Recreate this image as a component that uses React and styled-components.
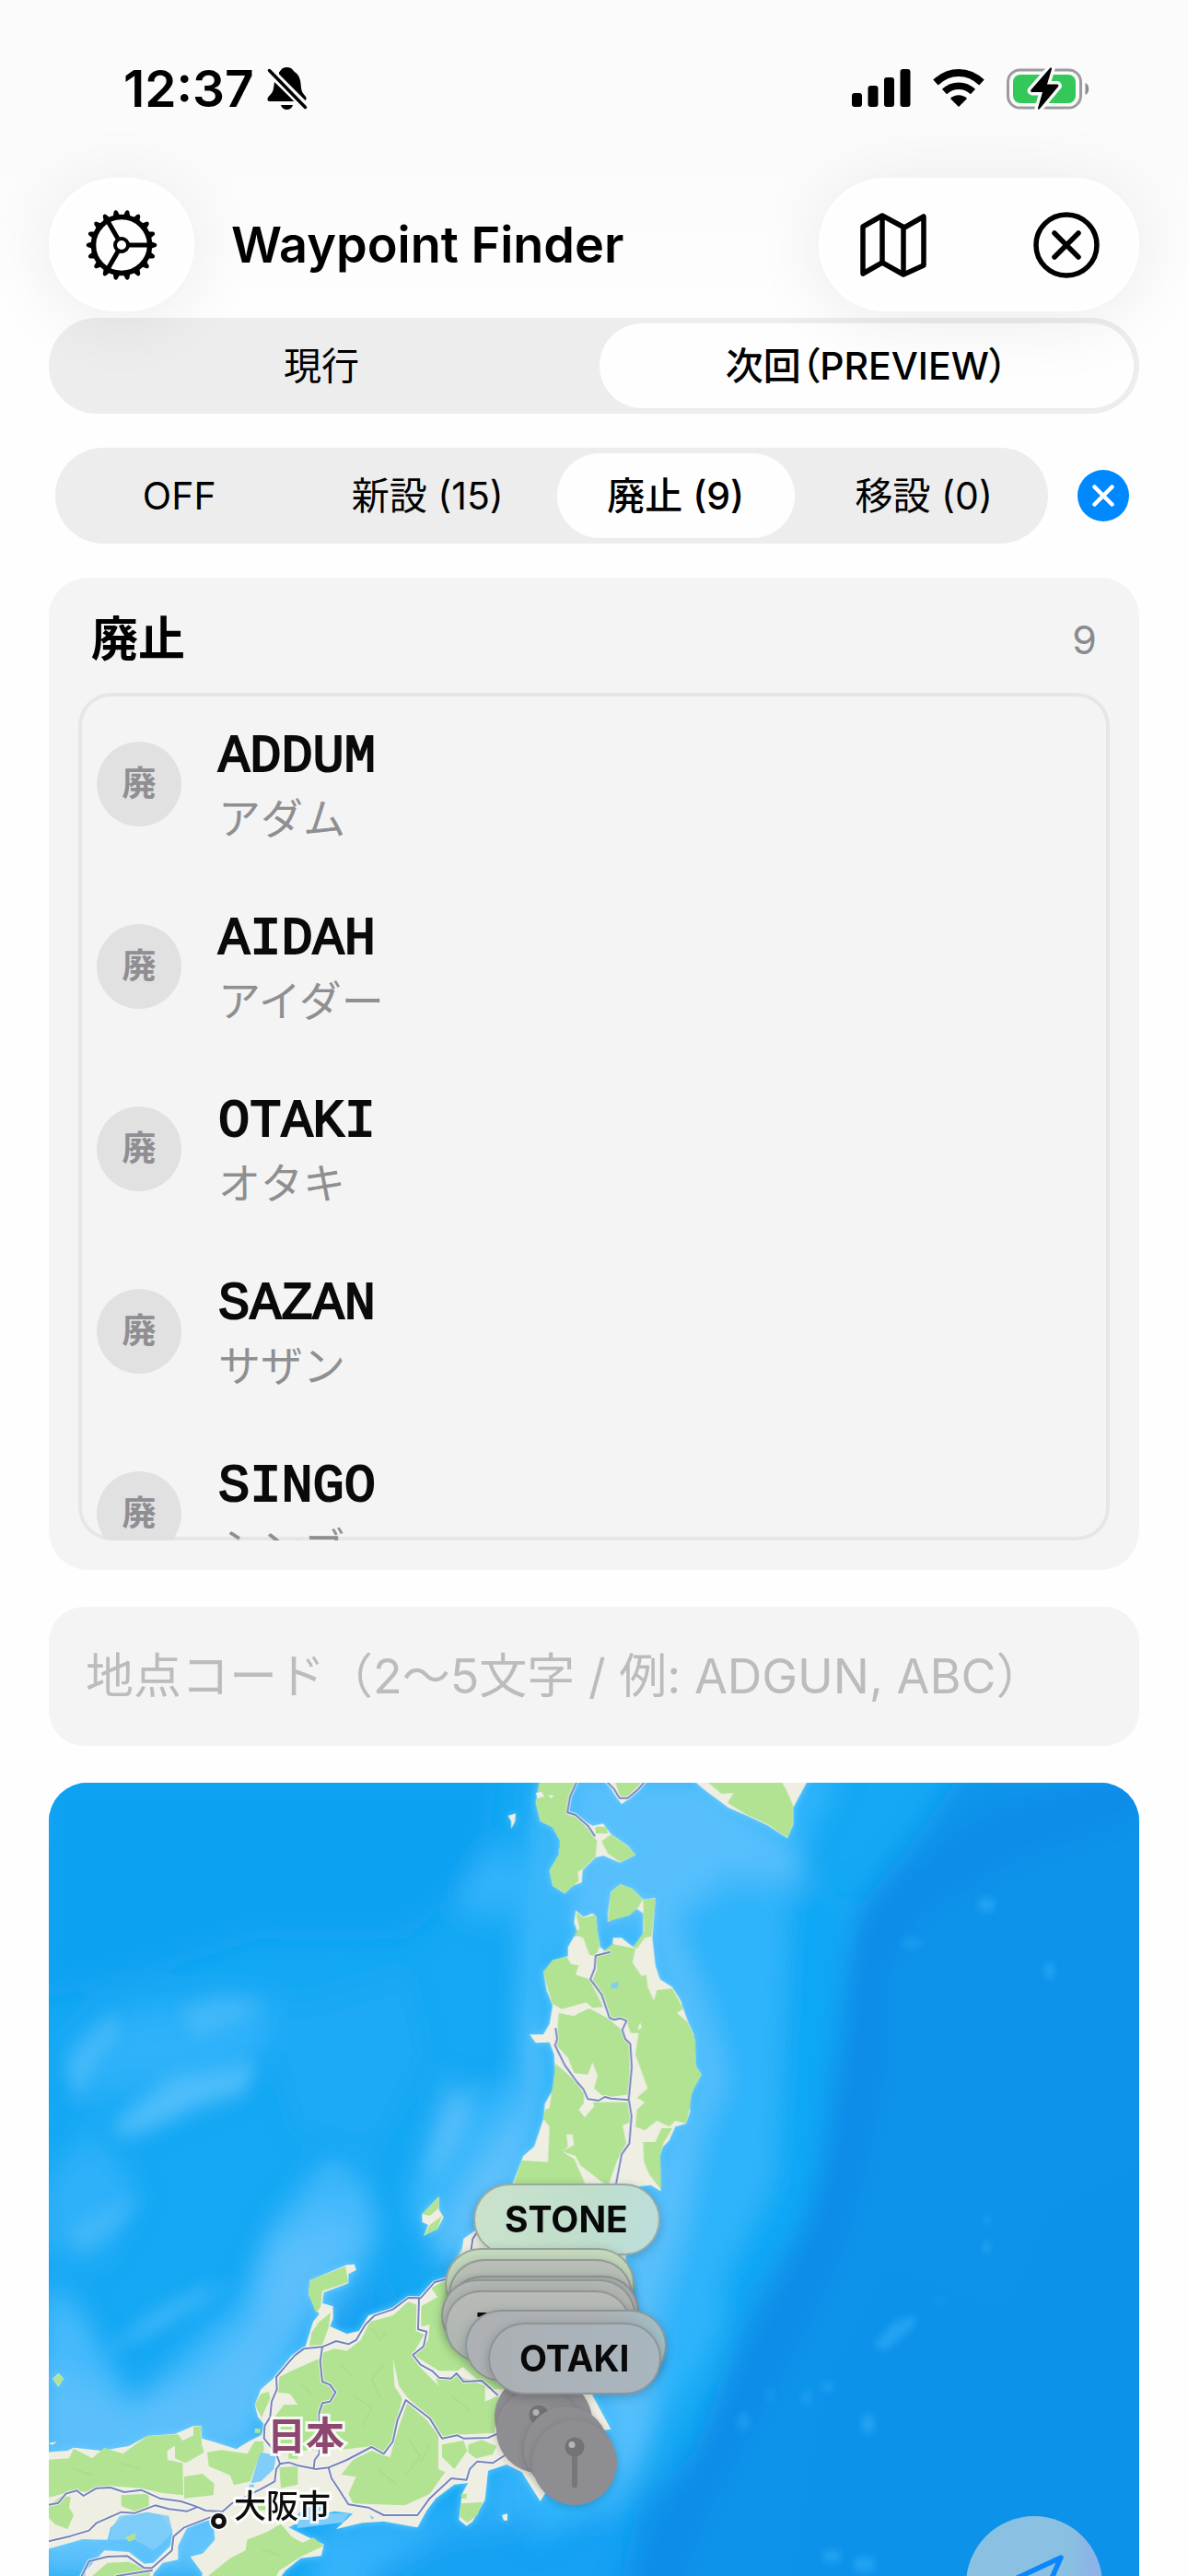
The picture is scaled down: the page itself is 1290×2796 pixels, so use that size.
import React, { useState } from "react";
import styled, { createGlobalStyle, css } from "styled-components";

const GlobalStyle = createGlobalStyle`
  * { box-sizing: border-box; }
  body {
    margin: 0;
    background: #fefefe;
    color: #000;
    font-family: "Inter", "Noto Sans CJK JP", sans-serif;
    -webkit-font-smoothing: antialiased;
  }
  button, input { font: inherit; color: inherit; }
  button { border: 0; padding: 0; background: none; cursor: pointer; }
`;

const Screen = styled.div`
  height: 100vh;
  overflow: hidden;
  display: flex;
  flex-direction: column;
  background: #fefefe;
`;

/* ---------- status bar ---------- */

const StatusBar = styled.div`
  flex: none;
  height: 193px;
  padding: 68px 106px 69px 134px;
  display: flex;
  align-items: center;
  justify-content: space-between;
  background: #fbfbfb;
`;

const StatusGroup = styled.div`
  display: flex;
  align-items: center;
  gap: ${(p) => p.$gap}px;
`;

const Clock = styled.time`
  font-size: 55px;
  font-weight: 600;
  line-height: 56px;
`;

/* ---------- navigation bar ---------- */

const NavBar = styled.header`
  position: relative;
  z-index: 1;
  flex: none;
  display: flex;
  align-items: center;
  padding: 0 53px;
  height: 145px;
  background: linear-gradient(#fbfbfb, #fefefe);
`;

const glass = css`
  height: 145px;
  border-radius: 73px;
  background: #fefefe;
  box-shadow: 0 8px 80px rgba(0, 0, 0, 0.08), inset 0 0 0 4px #fff;
`;

const RoundButton = styled.button`
  ${glass}
  width: 158px;
  display: grid;
  place-items: center;
`;

const ButtonGroup = styled.div`
  ${glass}
  width: 348px;
  display: flex;
  justify-content: space-between;
  padding: 0 31px 0 33px;
`;

const IconButton = styled.button`
  width: 96px;
  height: 145px;
  display: grid;
  place-items: center;
`;

const Title = styled.h1`
  flex: 1;
  margin: 0 0 0 40px;
  font-size: 54px;
  font-weight: 600;
  line-height: 66px;
`;

/* ---------- segmented controls ---------- */

const Content = styled.main`
  flex: none;
  display: flex;
  flex-direction: column;
  padding: 7px 53px 0;
`;

const Segmented = styled.div`
  flex: 1;
  height: 104px;
  display: grid;
  grid-auto-flow: column;
  grid-auto-columns: minmax(0, 1fr);
  border-radius: 52px;
  background: #ededed;
`;

const Segment = styled.button`
  margin: 6px;
  border-radius: 46px;
  font-size: 41px;
  font-weight: ${(p) => (p.$active ? 500 : 400)};
  font-feature-settings: "palt";
  line-height: 46px;
  white-space: nowrap;
  background: ${(p) => (p.$active ? "#fefefe" : "transparent")};
`;

const CycleRow = styled.div`
  display: flex;
`;

const FilterRow = styled.div`
  display: flex;
  align-items: center;
  gap: 32px;
  padding: 0 11px 0 7px;
  margin-top: 37px;
`;

const ClearButton = styled.button`
  width: 56px;
  height: 56px;
  border-radius: 50%;
  background: #0088ff;
  display: grid;
  place-items: center;
`;

/* ---------- result card ---------- */

const Card = styled.section`
  margin-top: 37px;
  padding: 0 32px 32px;
  border-radius: 42px;
  background: #f4f4f4;
`;

const CardHeader = styled.div`
  height: 125px;
  padding: 8px 14px 0;
  display: flex;
  align-items: center;
  justify-content: space-between;
`;

const CardTitle = styled.h2`
  margin: 0;
  font-size: 51px;
  font-weight: 700;
  line-height: 64px;
`;

const CardCount = styled.span`
  font-size: 43px;
  line-height: 64px;
  color: #8a8a8e;
`;

const List = styled.ul`
  height: 920px;
  margin: 0;
  padding: 0 20px;
  list-style: none;
  overflow: hidden;
  border-radius: 36px;
  box-shadow: inset 0 0 0 4px #e6e6e6;
`;

const Row = styled.li`
  height: 198px;
  display: flex;
  align-items: center;
  gap: 40px;
`;

const Badge = styled.span`
  width: 92px;
  height: 92px;
  border-radius: 50%;
  background: #e1e1e1;
  color: #8e8e93;
  font-size: 37px;
  font-weight: 600;
  line-height: 92px;
  text-align: center;
`;

const Names = styled.div`
  display: flex;
  flex-direction: column;
  padding-top: 8px;
`;

const Code = styled.span`
  font-family: "Liberation Mono", monospace;
  font-size: 57px;
  font-weight: 400;
  line-height: 66px;
  color: #0a0a0a;
  -webkit-text-stroke: 2px #0a0a0a;
`;

const Kana = styled.span`
  font-size: 46px;
  line-height: 66px;
  color: #8f8f92;
`;

const SearchField = styled.input`
  margin-top: 40px;
  width: 100%;
  height: 151px;
  padding: 0 40px;
  border: 0;
  outline: none;
  border-radius: 38px;
  background: #f4f4f4;
  font-size: 52px;
  &::placeholder { color: #bcbcbe; opacity: 1; }
`;

/* ---------- map ---------- */

const MapPanel = styled.section`
  position: relative;
  margin-top: 40px;
  height: 984px;
  overflow: hidden;
  border-radius: 42px;
  background: #12a5f3;
`;

const MapDrawing = styled.svg`
  display: block;
  width: 100%;
  height: 100%;
`;

const onMap = css`
  position: absolute;
  left: calc(50% - 592px + ${(p) => p.$x}px);
  top: ${(p) => p.$y}px;
`;

const PlaceLabel = styled.span`
  ${onMap}
  font-size: ${(p) => p.$size}px;
  font-weight: ${(p) => (p.$country ? 700 : 500)};
  line-height: 50px;
  color: ${(p) => (p.$country ? "#8e4770" : "#0c0c0c")};
  -webkit-text-stroke: 6px rgba(255, 255, 255, 0.85);
  paint-order: stroke fill;
`;

const CityDot = styled.span`
  ${onMap}
  width: 17px;
  height: 17px;
  border: 5px solid #111;
  border-radius: 50%;
  background: #fff;
  box-shadow: 0 0 0 2px rgba(255, 255, 255, 0.8);
`;

const PinDisc = styled.span`
  ${onMap}
  width: 92px;
  height: 92px;
  border-radius: 50%;
  background: #8e8d92;
  box-shadow: 0 2px 8px rgba(0, 0, 0, 0.16);
  svg { display: block; }
`;

const Tag = styled.span`
  ${onMap}
  width: ${(p) => p.$w}px;
  height: 78px;
  padding-left: 32px;
  border: 2px solid rgba(110, 118, 118, 0.5);
  border-radius: 39px;
  background: ${(p) => p.$fill};
  box-shadow: 0 3px 12px rgba(0, 0, 0, 0.2);
  color: #090909;
  font-size: 39px;
  font-weight: 700;
  line-height: 74px;
`;

const LocateButton = styled.button`
  position: absolute;
  right: 40px;
  bottom: 40px;
  width: 148px;
  height: 148px;
  border-radius: 50%;
  display: grid;
  place-items: center;
  background: linear-gradient(90deg, #8ac0e1 75%, #8cb4e8 92%);
`;

/* ---------- icons ---------- */

const BellSlash = () => (
  <svg width="44" height="48" viewBox="0 0 44 48" aria-hidden="true">
    <path d="M13 6.500C15 5 15.500 1 21.500 1c6 0 6.500 4 9 5.500 5.500 4 6 10 6.500 17 .3 4 2.500 6.500 5 9.500 1 1.300.7 3.500-.5 4L13 8.500z" />
    <path d="M8 17l21.500 21H3c-3 0-3-3-1.500-5C4 30 6.500 28 7 24z" />
    <path d="M15 42h13c-1 3.500-3.500 5-6.500 5S16 45.500 15 42z" />
    <path d="M2.500 4.500l39 40" stroke="#fbfbfb" strokeWidth="8" />
    <path d="M2.500 4.500l39 40" stroke="#000" strokeWidth="3.500" strokeLinecap="round" />
  </svg>
);

const Signal = () => (
  <svg width="64" height="42" viewBox="0 0 64 42" aria-hidden="true">
    <rect x="0" y="26" width="11" height="15" rx="3" />
    <rect x="17.500" y="18" width="11" height="23" rx="3" />
    <rect x="35" y="9" width="11" height="32" rx="3" />
    <rect x="52.500" y="0" width="11" height="41" rx="3" />
  </svg>
);

const Wifi = () => (
  <svg width="56" height="42" viewBox="0 0 56 42" aria-hidden="true">
    <path d="M28 41l-9-9c4.500-5 13.500-5 18 0z" />
    <path d="M12.500 24.500c9-8.500 22-8.500 31 0" fill="none" stroke="#000" strokeWidth="7.500" />
    <path d="M3 14.500c15-14 35-14 50 0" fill="none" stroke="#000" strokeWidth="8" />
  </svg>
);

const Battery = () => (
  <svg width="91" height="48" viewBox="0 0 91 48" aria-hidden="true">
    <rect x="1.500" y="4" width="79" height="41" rx="13" fill="none" stroke="#9c9c9c" strokeWidth="3" />
    <path d="M85.500 18c5 2 5 11 0 13z" fill="#8c8c8c" />
    <rect x="7" y="9" width="68" height="31" rx="8" fill="#34c759" />
    <path
      d="M47 2L26.500 25.500a1.500 1.500 0 0 0 1 2.500H39l-5 17.500c-.3 1.200 1 1.500 1.800.7L56 22a1.500 1.500 0 0 0-1-2.500H44L49 3c.3-1.300-1-2-2-1z"
      stroke="#fbfbfb" strokeWidth="7" paintOrder="stroke" strokeLinejoin="round"
    />
  </svg>
);

const teeth = Array.from({ length: 18 }, (_, i) => i * 20);

const Gear = () => (
  <svg width="78" height="78" viewBox="-39 -39 78 78" aria-hidden="true">
    {teeth.map((a) => (
      <path key={a} d="M30 -4.500L37 -2a2.200 2.200 0 0 1 0 4L30 4.500z" transform={`rotate(${a})`} />
    ))}
    <g fill="none" stroke="#000">
      <circle r="30.500" strokeWidth="5.500" />
      <circle r="7" strokeWidth="4" />
      {[0, 120, 240].map((a) => (
        <path key={a} d="M8 0H30" strokeWidth="5" transform={`rotate(${a})`} />
      ))}
    </g>
  </svg>
);

const FoldedMap = () => (
  <svg width="74" height="70" viewBox="0 0 74 70" fill="none" stroke="#000" strokeWidth="5.500" strokeLinejoin="round" aria-hidden="true">
    <path d="M4 15L25 3l24 13L70 4v53L48 67 25 54 4 66z" />
    <path d="M25 3v51M48 16v51" />
  </svg>
);

const CircleX = () => (
  <svg width="72" height="72" viewBox="0 0 72 72" fill="none" stroke="#000" strokeWidth="5.500" strokeLinecap="round" aria-hidden="true">
    <circle cx="36" cy="36" r="33" />
    <path d="M23 23l26 26M49 23L23 49" />
  </svg>
);

const SmallX = () => (
  <svg width="24" height="24" viewBox="0 0 24 24" fill="none" stroke="#fff" strokeWidth="4.500" strokeLinecap="round" aria-hidden="true">
    <path d="M2.500 2.500l19 19M21.500 2.500l-19 19" />
  </svg>
);

const PinGlyph = () => (
  <svg width="92" height="92" viewBox="0 0 92 92" aria-hidden="true">
    <path d="M43 34h6v36c-.5 5-5.500 5-6 0z" fill="#77767b" />
    <circle cx="46" cy="29" r="10.500" fill="#737277" />
    <circle cx="43" cy="26.500" r="3.500" fill="#b5b4b8" />
  </svg>
);

const LocateArrow = () => (
  <svg width="66" height="66" viewBox="0 0 66 66" fill="none" stroke="#0a86ff" strokeWidth="5.500" strokeLinejoin="round" aria-hidden="true">
    <path d="M62 4L4 31l28 3 4 28z" />
  </svg>
);

/* ---------- map artwork ---------- */

const Sea = () => (
  <>
    <rect x="53" y="1935" width="1184" height="984" fill="#15a8f4" />
    <g transform="translate(40 1920) scale(.4018 .5587)" filter="url(#soft)">
      <path d="M30 0H1250L1200 200 1000 330 600 330 300 400 0 450z" fill="#0ca1f1" />
      <path d="M620 480L1000 400 1050 560 900 750 700 700z" fill="#1aa9f5" />
      <path d="M60 560L170 480 320 460 500 440 660 450 600 560 560 620 400 660 250 712 190 700 330 610 120 650z" fill="#35b4fa" opacity=".8" />
      <path d="M40 780L150 700 290 830 180 950 60 950 0 900z" fill="#34b3fa" opacity=".8" />
      <path d="M20 1010L110 1040 260 1230 480 1080 540 1050 620 900 760 780 880 790 930 900 860 1000 700 1150 580 1330 0 1400z" fill="#45b9fb" />
      <path d="M20 1150L230 1230 430 1190 600 1080 640 930 780 880 900 920 800 960 640 1150 560 1340 0 1400z" fill="#60c1fb" opacity=".8" />
      <path d="M1350 0L1300 300 1290 600 1060 700 1000 850 1030 900 1150 960 1400 800 1600 0z" fill="#3bb7fb" />
      <path d="M1060 780L1160 640 1110 610 1080 700z M1320 440L1400 600 1270 830 1130 960 1060 940 1180 780 1340 640z M1380 100L1500 330 1390 300z" fill="#5ec1fb" />
      <path d="M1120 270L1200 170 1290 150 1330 250 1250 290z" fill="#33b3fa" />
      <path d="M700 1100L900 1010 1000 1010 860 1100z" fill="#189ff2" />
      <path d="M0 1430H600L500 1568H0z" fill="#62c3fb" />
      <path d="M760 1470L1200 1440 1260 1330 1600 1330 1600 1800H700z" fill="#35b2fa" />
      <path d="M900 1568L1100 1480 1300 1460 1600 1440 1600 1800H850z" fill="#14a1f3" />
    </g>
    <g transform="translate(40 1920) scale(.4018 .5587)" fill="#5cc1fb" filter="url(#haze)">
      <path d="M190 700L300 640 370 600 460 590 590 575 560 625 430 655 330 690 250 710z" opacity=".75" />
      <path d="M80 570L140 520 210 480 230 510 180 550 130 610 110 650z M380 470L500 445 620 455 540 490 430 520z" opacity=".5" />
      <path d="M170 1135L290 1070 330 1050 430 1015 530 995 430 1045 300 1100z" opacity=".6" />
      <path d="M90 890L200 850 280 835 200 900 110 940z M750 800L790 765 870 800 820 790z" opacity=".45" />
      <path d="M1050 780L1130 660 1210 590 1140 720 1080 790z" opacity=".5" />
    </g>
    <g transform="translate(620 1920) scale(.4273 .5587)" filter="url(#soft)">
      <path d="M-60 0H700L560 200 600 500 560 850 430 1000 340 1150 250 1250 100 1400 -100 1500z" fill="#2fb4fa" />
      <path d="M0 0H330L560 150 620 220 400 210 260 290 340 450 400 600 330 720 290 900 220 1060 200 1330 120 1400 60 1100 150 900 250 700 330 600 180 300 0 330z" fill="#5ec1fb" opacity=".85" />
      <path d="M560 240L700 250 660 560 600 840 450 1020 390 1100 380 1000 520 800z" fill="#10a7f5" />
      <path d="M1000 0L860 150 730 270 700 400 660 600 630 780 590 880 450 1050 380 1200 310 1330 170 1430 130 1568V1800H1500V0z" fill="#1093ea" />
      <path d="M1500 750L1220 850 1100 1050 800 960 640 1200 570 1500 540 1800H1500z" fill="#0792ea" opacity=".8" />
      <path d="M1500 20L1100 130 850 240 750 370 750 560 700 760 640 920 540 1080 400 1280 300 1420 200 1620" fill="none" stroke="#0b8ae7" strokeWidth="90" opacity=".85" />
    </g>
    <g transform="translate(620 1920) scale(.4273 .5587)" fill="#29a9f4" opacity=".75" filter="url(#glow)">
      <path d="M765 1120L820 1075 880 1060 870 1085 800 1130z M915 1035l45-8-20 10z" />
      <circle cx="1216" cy="392" r="15" /><ellipse cx="1056" cy="264" rx="24" ry="14" />
      <ellipse cx="865" cy="338" rx="28" ry="12" opacity=".6" /><circle cx="1056" cy="928" r="11" />
      <circle cx="1056" cy="876" r="8" /><ellipse cx="652" cy="1200" rx="20" ry="7" />
      <circle cx="598" cy="1222" r="16" opacity=".6" /><circle cx="755" cy="1272" r="19" />
      <circle cx="438" cy="1268" r="18" opacity=".7" /><circle cx="506" cy="1216" r="12" opacity=".6" />
      <ellipse cx="663" cy="1530" rx="24" ry="13" /><ellipse cx="745" cy="1545" rx="30" ry="15" />
    </g>
  </>
);

const NorthLand = () => (
  <g transform="translate(500 1930) scale(.33333)">
    <g fill="#eeeee3" filter="url(#coast)">
      <path d="M260 0L245 80 260 140 300 160 325 205 320 250 290 300 300 350 340 376 365 350 395 340 398 300 440 258 465 252 520 275 570 250 545 220 490 182 465 148 430 155 380 125 350 112 355 60 385 0z" />
      <path d="M470 0L500 50 525 85 550 65 605 12V0z M764 0V12L800 42 873 96 940 125 1001 154 1065 196 1084 150 1084 96 1129 12V0z" />
      <path d="M155 122L180 115 178 140 165 165 165 140z" />
      <path d="M375 430L400 452 430 440 442 450 445 490 455 550 470 562 495 555 497 520 525 520 560 548 575 548 595 510 595 440 575 425 520 450 480 468 480 440 490 370 520 345 560 360 595 395 635 390 625 520 635 610 650 655 690 680 715 720 740 790 760 835 768 940 785 965 760 1010 745 1050 748 1085 735 1125 700 1135 680 1180 660 1200 650 1230 652 1345 620 1325 580 1330 540 1550 520 1730 0 1700 -10 1560 10 1520 50 1480 170 1320 205 1230 240 1200 270 1110 275 1060 310 1000 305 900 290 860 245 862 225 835 270 835 290 800 300 740 280 690 270 630 350 578 350 550 370 515 385 512 370 470z" />
    </g>
    <g fill="#b1e393">
      <path d="M260 0L245 80 260 140 300 160 325 205 320 250 290 300 300 350 340 374 385 335 382 305 400 295 440 255 445 205 420 170 380 125 350 112 355 60 380 0z" />
      <path d="M440 158H475L480 180H440z M460 205L490 184 545 222 570 250 520 274 480 245z M500 0L520 60 545 60 595 12V0z M790 0L850 50 890 48 870 80 930 118 1001 150 1065 194 1082 150 1084 90 1062 40 1040 0z" />
      <path d="M270 630L300 592 345 580 360 605 385 610 375 640 420 655 465 745 430 748 410 730 330 752 300 735 285 690z" />
      <path d="M375 435L400 455 440 445 445 490 453 550 440 580 420 575 400 520 370 510 388 490z" />
      <path d="M480 466L490 370 520 346 560 360 593 395 580 420 550 448z M595 395L635 392 622 515 600 520 575 555 562 550 598 500z" />
      <path d="M445 620L440 585 495 540 570 555 560 600 590 645 605 640 610 680 630 725 640 690 690 685 725 750 705 765 740 795 765 850 767 940 785 965 755 1020 745 1080 735 1125 700 1115 680 1135 640 1115 600 1147 570 1135 575 1080 600 1055 575 1040 610 1010 570 900 580 830 555 830 540 790 490 780 470 740 430 660z" />
      <path d="M320 765L370 775 385 765 420 750 480 782 525 820 553 870 550 1030 470 1040 435 1010 447 970 430 925 415 965 370 960 350 910 312 870z" />
      <path d="M310 930L380 990 412 1045 385 1080 405 1105 425 1080 430 1055 545 1055 555 1120 528 1130 540 1190 510 1245 480 1330 390 1260 375 1230 330 1215 370 1195 365 1160 345 1160 350 1200 330 1215 370 1240 410 1330 170 1330 200 1245 285 1250 290 1135 270 1110 275 1080 290 1075z" />
      <path d="M595 1185L635 1185 655 1140 690 1140 660 1190 650 1230 653 1340 615 1290 598 1250z" />
    </g>
    <g fill="#f0f0e6">
      <path d="M245 48l20-4 8 16-22 6z M285 55l20 2-10 10z M585 795l6 18-14 6z M405 1010l20 10 10 50-20 20-14-30z" />
    </g>
    <path d="M492 668l22-5-2 20-22 2z" fill="#7fcdf5" />
  </g>
);

const CentralLand = () => (
  <g transform="translate(50 2360) scale(.33333)">
    <g fill="#eeeee3" filter="url(#coast)">
      <path d="M0 905L70 900 90 890 180 900 270 885 330 852 420 845 480 820 505 818 508 860 550 872 620 895 660 870 700 850 715 820 690 790 680 750 700 700 740 665 760 640 800 590 845 560 870 480 890 455 880 440 855 390 860 345 980 295 1005 293 1010 312 985 325 985 355 905 385 900 420 935 430 935 470 925 495 980 520 1020 510 1050 460 1130 435 1180 400 1215 400 1260 350 1300 340 1355 250 1360 210 1395 185 1500 150 1890 150 1890 260 1780 720 1840 830 1700 850 1625 1040 1610 1065 1550 970 1500 945 1440 965 1430 1060 1390 1130 1370 1145 1345 1125 1355 1040 1375 1005 1330 1010 1270 1055 1240 1095 1210 1150 1100 1130 1030 1135 945 1155 1000 1105 940 1097 880 1110 830 1130 790 1150 850 1180 905 1205 897 1242 830 1250 780 1290 700 1400 480 1400 510 1300 470 1245 510 1235 550 1190 545 1125 500 1130 460 1150 430 1210 430 1255 380 1265 350 1300 330 1400H110L130 1290 190 1225 270 1230 320 1268 350 1265 415 1200 410 1155 370 1108 330 1100 260 1112 210 1150 200 1190 120 1188 0 1222z" />
      <path d="M1225 130L1280 72 1280 115 1295 140 1275 178 1230 200 1245 165 1225 155z M22 665L40 648 57 665 40 692z M1485 1110l18-5v22h-12z M8 875l28-4-16 10z" />
    </g>
    <g fill="#b1e393">
      <path d="M0 930L75 925 90 893 150 925 190 890 250 910 330 852 430 847 445 868 395 900 395 930 445 940 447 1045 380 1038 310 1022 210 1015 130 1035 95 1030 0 1055z" />
      <path d="M420 880L480 850 480 822 505 820 507 880 515 905 455 940 420 925z M525 905L570 898 655 910 680 870 708 870 710 898 690 930 665 1000 612 1012 600 980 530 950z" />
      <path d="M450 985L510 975 548 1008 545 1045 450 1055z M245 1045L335 1040 335 1085 290 1097 245 1080z M0 1085L50 1048 80 1050 75 1085 90 1110 70 1155 30 1140 0 1110z M760 955L820 950 820 1010 765 1022z" />
      <path d="M905 580L940 568 980 575 1025 540 1055 480 1130 460 1180 415 1207 425 1205 510 1232 522 1192 590 1220 630 1280 690 1270 665 1340 655 1430 690 1430 740 1475 720 1460 842 1340 848 1290 855 1250 790 1180 730 1150 690 1130 598 1135 690 1160 730 1130 860 1100 903 1060 885 980 895 820 900 770 895 745 880 745 790 775 750 820 750 795 715 755 710 760 660 800 640 890 600z" />
      <path d="M1177 745L1240 800 1278 850 1278 960 1300 970 1250 1040 1170 1078 1000 1072 985 1040 1010 985 962 978 1000 930 1060 900 1120 922 1150 820z" />
      <path d="M1290 880L1360 867 1372 900 1330 960 1290 920z M1375 880L1420 865 1467 885 1455 912 1400 925 1375 905z M1350 1072L1422 1068 1405 1110 1372 1135 1348 1115z M1352 1040h18v16h-18z" />
      <path d="M500 1330L600 1250 650 1225 655 1190 720 1165 765 1138 800 1180 835 1200 870 1183 905 1210 830 1245 760 1290 700 1400 480 1400z M680 750L700 715 725 708 730 730 702 792z M760 870h40v40h-40z M790 900h30v26h-30z M690 1080h24v14h-24z M680 828h18v14h-18z" />
      <path d="M855 390L860 345 975 300 985 352 900 380 895 430 880 452z M858 558L865 515 890 480 927 450 920 500 900 555z M1222 430L1275 400 1255 370 1300 345 1330 570 1378 612 1340 640 1280 640 1200 590 1245 540 1250 490 1222 495z" />
      <path d="M1400 250H1850L1760 700H1440L1350 620z" />
      <path d="M1225 130L1280 72 1278 112 1250 135z M1250 165L1290 135 1275 178 1230 200z M22 665L40 650 57 665 40 690z M150 1308L200 1265 270 1262 340 1290 330 1400H130z M258 1180l34-12-2 20-20 6z" />
    </g>
    <g fill="none" stroke="#a5d589" strokeWidth="5" opacity=".5">
      <path d="M1060 500l30 40 20-30M1100 620l-40 50 30 60M960 620l40 40M1000 720l60 40-30 60M1180 860l40 60-50 60M1080 960l60 50M1250 880l-30 60M830 680l40 40M90 960l60 20M240 940l70 20M1320 720l60 50M700 1220l60 20" />
    </g>
    <g fill="#7fcdf8">
      <path d="M700 905L750 915 742 960 700 1000 668 1006 690 930z M820 1105l60-40 28 10-20 30 100-2-20 30-150 20z M662 1010h16v12h-16z M1055 1110l14 8-8 6z" />
      <path d="M240 1112L330 1102 400 1112 412 1165 380 1200 350 1225 290 1190 205 1190 215 1150z" opacity=".9" />
    </g>
    <path d="M258 1182l34-14-2 20-20 8z" fill="#b1e393" />
  </g>
);

const northRoads = [
  "M487 566L440 578 437 620 423 655 460 705 485 780 500 787 520 782 541 790 527 820 537 850 553 865 558 940 548 1045 557 1100 550 1190 525 1225 505 1330",
  "M310 815L315 850 308 870 340 935 380 990 400 1012 415 1045 450 1050 470 1038 490 1043 548 1048",
  "M384 0L357 60 348 112 375 120 415 155 437 188",
  "M465 0L500 35 518 65 545 65 580 35 610 0",
];

const centralRoads = [
  "M0 1078L40 1070 65 1040 100 1030 122 1047 165 1022 210 1020 255 1035 310 1028 370 1055 440 1065 490 1082 520 1095 575 1098 605 1072 700 1025 745 1000 750 960 762 943 790 938 820 948 880 960 920 955 980 930 1060 888 1100 910 1130 870 1145 800 1172 735 1250 795 1290 860 1340 850 1360 860 1440 858 1470 845",
  "M0 1197L80 1178 140 1160 165 1135 245 1100 290 1103 355 1078 400 1090 460 1097 490 1085",
  "M762 943L750 910 710 860 712 820 730 790 735 740 752 700 750 660 810 590 840 568 900 562 945 543 985 553 1010 540 1040 490 1070 460 1130 440 1180 402 1220 403 1265 352 1300 342",
  "M900 562L893 610 900 675 925 685 943 710 925 740 900 745 890 775 890 910 875 930 872 957",
  "M1215 403L1212 505 1240 512 1230 560 1195 588 1220 620 1260 642 1280 662 1320 665 1337 648 1360 675 1420 672 1470 718",
  "M920 955L930 990 950 1020 985 1075 1050 1085 1100 1110 1210 1110 1250 1055 1320 990 1370 995 1380 960 1405 935 1455 940 1495 915",
  "M110 1320L140 1260 200 1245 265 1243 320 1282 345 1282 410 1225 415 1180 450 1150 540 1115",
  "M230 1308L345 1290",
  "M1385 245L1390 210 1402 192",
];

const Roads = ({ lines, x, y }) => (
  <g transform={`translate(${x} ${y}) scale(.33333)`} fill="none" strokeLinejoin="round" strokeLinecap="round">
    <path d={lines.join("")} stroke="#f7f7fb" strokeWidth="12" opacity=".8" />
    <path d={lines.join("")} stroke="#7685b8" strokeWidth="6" />
  </g>
);

const Artwork = () => (
  <MapDrawing viewBox="53 1935 1184 984" preserveAspectRatio="xMidYMin slice" aria-hidden="true">
    <defs>
      <filter id="soft" x="-10%" y="-10%" width="120%" height="120%">
        <feGaussianBlur stdDeviation="30" />
      </filter>
      <filter id="haze" x="-10%" y="-10%" width="120%" height="120%">
        <feGaussianBlur stdDeviation="18" />
      </filter>
      <filter id="glow" x="-10%" y="-10%" width="120%" height="120%">
        <feGaussianBlur stdDeviation="8" />
      </filter>
      <filter id="coast" x="-5%" y="-5%" width="110%" height="110%">
        <feDropShadow dx="0" dy="0" stdDeviation="12" floodColor="#6fd0fd" floodOpacity=".9" />
      </filter>
    </defs>
    <Sea />
    <NorthLand />
    <CentralLand />
    <Roads lines={northRoads} x={500} y={1930} />
    <Roads lines={centralRoads} x={50} y={2360} />
  </MapDrawing>
);

/* ---------- data ---------- */

const cycles = ["現行", "次回（PREVIEW）"];
const filters = ["OFF", "新設 (15)", "廃止 (9)", "移設 (0)"];

const waypoints = [
  { code: "ADDUM", kana: "アダム" },
  { code: "AIDAH", kana: "アイダー" },
  { code: "OTAKI", kana: "オタキ" },
  { code: "SAZAN", kana: "サザン" },
  { code: "SINGO", kana: "シンゴ" },
];

const pins = [
  { x: 484, y: 642 },
  { x: 498, y: 647 },
  { x: 486, y: 657 },
  { x: 516, y: 677 },
  { x: 525, y: 692 },
];

const tags = [
  { x: 461, y: 435, w: 203, fill: "linear-gradient(100deg, #cbe2cc, #bfdecb 60%, #bcdedd)", label: "STONE" },
  { x: 430, y: 505, w: 206, fill: "linear-gradient(#c4d9bd, #b9cdb3)" },
  { x: 434, y: 517, w: 200, fill: "#b8beb6" },
  { x: 432, y: 535, w: 209, fill: "#a9b0ae" },
  { x: 426, y: 539, w: 211, fill: "#b2b6b2" },
  { x: 430, y: 551, w: 203, fill: "linear-gradient(#b8bbb8, #adb4b0)", label: "T" },
  { x: 452, y: 572, w: 219, fill: "linear-gradient(90deg, #adb1b4 70%, #9fbfc8)" },
  { x: 477, y: 586, w: 188, fill: "linear-gradient(90deg, #abafb3, #a9b6bf)", label: "OTAKI" },
];

export default function App() {
  const [cycle, setCycle] = useState(1);
  const [filter, setFilter] = useState(2);

  return (
    <Screen>
      <GlobalStyle />
      <StatusBar>
        <StatusGroup $gap={14}>
          <Clock>12:37</Clock>
          <BellSlash />
        </StatusGroup>
        <StatusGroup $gap={24}>
          <Signal />
          <Wifi />
          <Battery />
        </StatusGroup>
      </StatusBar>

      <NavBar>
        <RoundButton aria-label="設定"><Gear /></RoundButton>
        <Title>Waypoint Finder</Title>
        <ButtonGroup>
          <IconButton aria-label="地図"><FoldedMap /></IconButton>
          <IconButton aria-label="閉じる"><CircleX /></IconButton>
        </ButtonGroup>
      </NavBar>

      <Content>
        <CycleRow>
          <Segmented role="group">
            {cycles.map((name, i) => (
              <Segment key={name} $active={i === cycle} aria-pressed={i === cycle} onClick={() => setCycle(i)}>
                {name}
              </Segment>
            ))}
          </Segmented>
        </CycleRow>

        <FilterRow>
          <Segmented role="group">
            {filters.map((name, i) => (
              <Segment key={name} $active={i === filter} aria-pressed={i === filter} onClick={() => setFilter(i)}>
                {name}
              </Segment>
            ))}
          </Segmented>
          <ClearButton aria-label="解除" onClick={() => setFilter(0)}><SmallX /></ClearButton>
        </FilterRow>

        <Card>
          <CardHeader>
            <CardTitle>廃止</CardTitle>
            <CardCount>9</CardCount>
          </CardHeader>
          <List>
            {waypoints.map((w) => (
              <Row key={w.code}>
                <Badge>廃</Badge>
                <Names>
                  <Code>{w.code}</Code>
                  <Kana>{w.kana}</Kana>
                </Names>
              </Row>
            ))}
          </List>
        </Card>

        <SearchField
          type="text"
          aria-label="地点コード"
          placeholder="地点コード（2〜5文字 / 例: ADGUN, ABC）"
        />

        <MapPanel>
          <Artwork />
          <PlaceLabel $country $x={237} $y={684} $size={42}>日本</PlaceLabel>
          <PlaceLabel $x={201} $y={760} $size={35}>大阪市</PlaceLabel>
          <CityDot $x={176} $y={793} />
          {pins.map((p) => (
            <PinDisc key={`${p.x}-${p.y}`} $x={p.x} $y={p.y}><PinGlyph /></PinDisc>
          ))}
          {tags.map((t) => (
            <Tag key={`${t.x}-${t.y}`} $x={t.x} $y={t.y} $w={t.w} $fill={t.fill}>{t.label}</Tag>
          ))}
          <LocateButton aria-label="現在地"><LocateArrow /></LocateButton>
        </MapPanel>
      </Content>
    </Screen>
  );
}
